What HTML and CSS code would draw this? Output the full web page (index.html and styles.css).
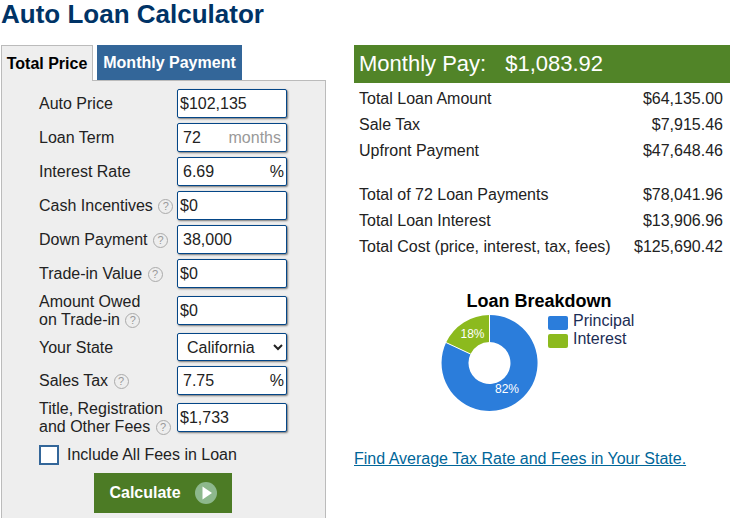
FILE: index.html
```html
<!DOCTYPE html>
<html lang="en">
  <head>
    <meta charset="UTF-8" />
    <meta name="viewport" content="width=device-width, initial-scale=1.0" />
    <title>Auto Loan Calculator</title>
    <link rel="stylesheet" href="styles.css">
  </head>
  <body>
    <a class="print-link" href="#">Print</a>
    <h1>Auto Loan Calculator</h1>

    <div class="main">
      <div class="calc">
        <div class="tabs">
          <div class="tab tab-active">Total Price</div>
          <div class="tab tab-other">Monthly Payment</div>
        </div>
        <form class="panel">
          <div class="row">
            <label>Auto Price</label>
            <input class="field" type="text" value="$102,135" />
          </div>
          <div class="row">
            <label>Loan Term</label>
            <div class="field-wrap">
              <input class="field field-pad" type="text" value="72" />
              <span class="suffix suffix-grey">months</span>
            </div>
          </div>
          <div class="row">
            <label>Interest Rate</label>
            <div class="field-wrap">
              <input class="field field-pad" type="text" value="6.69" />
              <span class="suffix">%</span>
            </div>
          </div>
          <div class="row">
            <label>Cash Incentives <span class="help">?</span></label>
            <input class="field" type="text" value="$0" />
          </div>
          <div class="row">
            <label>Down Payment <span class="help">?</span></label>
            <input class="field field-pad" type="text" value="38,000" />
          </div>
          <div class="row">
            <label>Trade-in Value <span class="help">?</span></label>
            <input class="field" type="text" value="$0" />
          </div>
          <div class="row row-tall">
            <label>Amount Owed<br />on Trade-in <span class="help">?</span></label>
            <input class="field" type="text" value="$0" />
          </div>
          <div class="row row-select">
            <label>Your State</label>
            <select class="field field-select">
              <option>California</option>
            </select>
          </div>
          <div class="row">
            <label>Sales Tax <span class="help">?</span></label>
            <div class="field-wrap">
              <input class="field field-pad" type="text" value="7.75" />
              <span class="suffix">%</span>
            </div>
          </div>
          <div class="row row-tall">
            <label>Title, Registration<br />and Other Fees <span class="help">?</span></label>
            <input class="field" type="text" value="$1,733" />
          </div>
          <div class="check-row">
            <span class="check-box"></span>
            <span>Include All Fees in Loan</span>
          </div>
          <button class="calc-btn" type="button">
            Calculate
            <svg width="22" height="22" viewBox="0 0 22 22">
              <circle cx="11" cy="11" r="11" fill="#8db88c" />
              <path d="M7.5 4.5 L17 11 L7.5 17.5 Z" fill="#fff" />
            </svg>
          </button>
        </form>
      </div>

      <div class="results">
        <div class="pay-bar"><span>Monthly Pay:</span><span>$1,083.92</span></div>
        <table class="summary">
          <tr><td>Total Loan Amount</td><td>$64,135.00</td></tr>
          <tr><td>Sale Tax</td><td>$7,915.46</td></tr>
          <tr><td>Upfront Payment</td><td>$47,648.46</td></tr>
          <tr class="group-start"><td>Total of 72 Loan Payments</td><td>$78,041.96</td></tr>
          <tr><td>Total Loan Interest</td><td>$13,906.96</td></tr>
          <tr><td>Total Cost (price, interest, tax, fees)</td><td>$125,690.42</td></tr>
        </table>

        <svg class="chart" width="376" height="140" viewBox="354 285 376 140">
          <text class="chart-title" x="539" y="306" text-anchor="middle">Loan Breakdown</text>
          <path d="M489.5 314 A48 48 0 1 1 446.1 341.6 L470.5 353 A21 21 0 1 0 489.5 341 Z" fill="#2b7ddb" />
          <path d="M489.5 314 L489.5 341 A21 21 0 0 0 470.5 353 L446.1 341.6 A48 48 0 0 1 489.5 314 Z" fill="#8cba1e" />
          <path d="M446.1 341.6 L470.5 353 M489.5 314 L489.5 341" stroke="#fff" stroke-width="1" fill="none" />
          <text class="chart-pct" x="472.5" y="337" text-anchor="middle">18%</text>
          <text class="chart-pct" x="507" y="392" text-anchor="middle">82%</text>
          <rect x="548" y="315" width="20" height="14" rx="2" fill="#2b7ddb" />
          <rect x="548" y="333" width="20" height="14" rx="2" fill="#8cba1e" />
          <text class="chart-legend" x="573" y="325">Principal</text>
          <text class="chart-legend" x="573" y="343">Interest</text>
        </svg>

        <a class="state-link" href="#">Find Average Tax Rate and Fees in Your State.</a>
      </div>
    </div>
  </body>
</html>
```

FILE: styles.css
```css
html,
body {
  height: 100%;
  overflow: hidden;
}

body {
  font-family: "Liberation Sans", Arial, sans-serif;
  font-size: 16px;
  margin: 0;
  background: #fff;
  color: #000;
  position: relative;
}

h1 {
  margin: 0 0 0 1px;
  height: 45px;
  font-size: 26px;
  line-height: 28px;
  font-weight: bold;
  color: #003366;
}

.print-link {
  position: absolute;
  top: -16px;
  right: 1px;
  color: #006699;
}

.main {
  display: flex;
  align-items: flex-start;
  padding-left: 1px;
}

/* Left side */
.calc {
  width: 325px;
  flex-shrink: 0;
}

.tabs {
  display: flex;
  gap: 4px;
  position: relative;
  z-index: 1;
}

.tab {
  font-weight: bold;
  display: flex;
  align-items: center;
  box-sizing: border-box;
  height: 35px;
}

.tab-active {
  width: 92px;
  height: 36px;
  justify-content: center;
  background: #eee;
  border: 1px solid #bbb;
  border-bottom: 0;
  margin-bottom: -1px;
}

.tab-other {
  width: 145px;
  justify-content: center;
  background: #336699;
  color: #fff;
}

.panel {
  background: #eee;
  border: 1px solid #bbb;
  padding: 8px 0 20px 37px;
  display: flex;
  flex-direction: column;
  gap: 5px;
  color: #222;
}

.row {
  display: flex;
  align-items: center;
  height: 29px;
  width: 248px;
}

.row-tall {
  height: 35px;
}

.row-select {
  height: 28px;
}

.row-select label {
  padding-top: 1px;
}

.row label {
  width: 138px;
  flex-shrink: 0;
  line-height: 18px;
}

.field {
  box-sizing: border-box;
  width: 110px;
  height: 29px;
  padding: 0 0 0 2px;
  margin: 0;
  border: 1px solid #044687;
  border-radius: 2px;
  box-shadow: 1px 1px 2px #777;
  background: #fff;
  font-family: "Liberation Sans", Arial, sans-serif;
  font-size: 16px;
  color: #222;
}

.field-pad {
  padding-left: 5px;
}

.field-select {
  height: 28px;
  padding-left: 5px;
}

.field-wrap {
  position: relative;
  width: 110px;
  height: 29px;
}

.suffix {
  position: absolute;
  right: 3px;
  top: 6px;
  color: #222;
}

.suffix-grey {
  right: 6px;
  color: #999;
}

.help {
  display: inline-block;
  box-sizing: border-box;
  width: 15px;
  height: 15px;
  border: 1.5px solid #aaa;
  border-radius: 50%;
  font-size: 11px;
  line-height: 12px;
  text-align: center;
  color: #999;
  vertical-align: 1px;
  margin-left: 1px;
}

.check-row {
  display: flex;
  align-items: center;
  gap: 8px;
  margin-top: 5px;
  height: 20px;
}

.check-box {
  box-sizing: border-box;
  width: 20px;
  height: 20px;
  border: 2px solid #336699;
  background: #fff;
}

.calc-btn {
  display: flex;
  align-items: center;
  justify-content: center;
  gap: 14px;
  width: 138px;
  height: 40px;
  margin: 3px 0 0 55px;
  padding: 0;
  border: 0;
  background: #4c7b25;
  color: #fff;
  font-family: "Liberation Sans", Arial, sans-serif;
  font-size: 16px;
  font-weight: bold;
}

/* Right side */
.results {
  flex: 1;
  margin-left: 28px;
}

.pay-bar {
  display: flex;
  align-items: center;
  gap: 19px;
  height: 38px;
  padding-left: 5px;
  background: #518428;
  color: #fff;
  font-size: 22px;
}

.summary {
  width: 369px;
  margin-top: 3px;
  border-collapse: collapse;
  color: #222;
}

.summary td {
  height: 26px;
  padding: 0 0 0 5px;
}

.summary td:last-child {
  text-align: right;
  padding-left: 0;
}

.summary .group-start td {
  padding-top: 18px;
}

.chart {
  display: block;
  margin-top: 26px;
}

.chart-title {
  font-size: 18px;
  font-weight: bold;
  fill: #000;
}

.chart-pct {
  font-size: 12px;
  fill: #fff;
}

.chart-legend {
  font-size: 16px;
  fill: #1c2d55;
}

.state-link {
  display: inline-block;
  margin-top: 24px;
  color: #006699;
}
```
